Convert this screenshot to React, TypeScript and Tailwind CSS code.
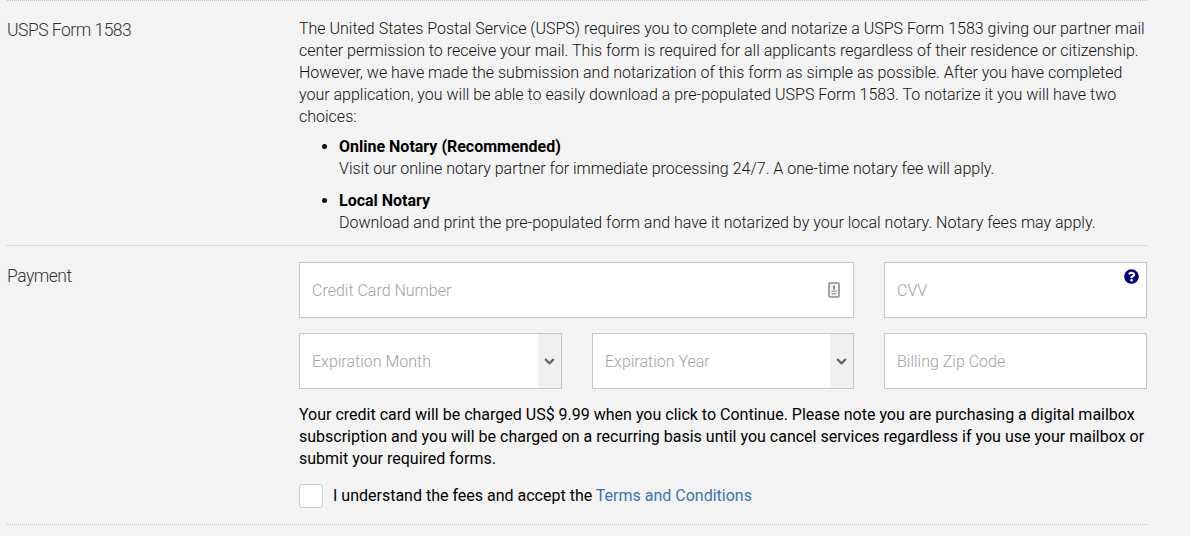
import { ChevronDown } from "lucide-react"

function CardIcon() {
  return (
    <svg viewBox="0 0 12 16" className="absolute right-[14px] top-[20px] h-[16px] w-[12px]">
      <rect x="1" y="1" width="10" height="14" rx="1" fill="#f4f4f4" stroke="#8c8c8c" strokeWidth="1.6" />
      <rect x="5" y="3.5" width="2" height="4" fill="#8c8c8c" />
      <rect x="3.5" y="8.5" width="5" height="1.5" fill="#a8a8a8" />
      <rect x="3.5" y="11" width="5" height="1.5" fill="#a8a8a8" />
    </svg>
  )
}

function Field({ placeholder }: { placeholder: string }) {
  return (
    <input
      placeholder={placeholder}
      className="h-[56px] w-full border border-[#c6c6c6] bg-white px-[12px] text-base font-light text-black outline-none placeholder:text-[#a2a2a2]"
    />
  )
}

function SelectBox({ label, className }: { label: string; className: string }) {
  return (
    <div className={`flex h-[56px] items-stretch border border-[#c6c6c6] bg-white ${className}`}>
      <div className="flex flex-1 items-center pt-[1px] pl-[12px] text-base font-light text-[#a2a2a2]">{label}</div>
      <div className="flex w-[23px] items-center justify-center bg-[#f0f0f0]">
        <ChevronDown className="h-[15px] w-[15px] text-[#666666]" strokeWidth={3.5} />
      </div>
    </div>
  )
}

export default function App() {
  return (
    <div className="h-[536px] w-[1190px] overflow-hidden bg-[#f3f3f3] pl-[7px] font-['Roboto',sans-serif] text-base leading-[22px] text-[#111111]">
      <div className="w-[1140px] border-t border-dotted border-[#c4c4c4]">
        <div className="flex border-b border-dotted border-[#c4c4c4] pt-[17px] pb-[11px]">
          <div className="w-[292px] pt-[1px] text-[17.5px] leading-[22px] font-light tracking-[-0.5px] text-[#333333]">USPS Form 1583</div>
          <div className="flex-1 font-light">
            <p>
              The United States Postal Service (USPS) requires you to complete and notarize a USPS Form 1583 giving our partner mail
              center permission to receive your mail. This form is required for all applicants regardless of their residence or citizenship.
              However, we have made the submission and notarization of this form as simple as possible. After you have completed
              your application, you will be able to easily download a pre-populated USPS Form 1583. To notarize it you will have two
              choices:
            </p>
            <ul className="mt-[8px] list-disc pl-10">
              <li className="mb-[10px]">
                <strong className="font-bold text-black">Online Notary (Recommended)</strong>
                <br />
                Visit our online notary partner for immediate processing 24/7. A one-time notary fee will apply.
              </li>
              <li>
                <strong className="font-bold text-black">Local Notary</strong>
                <br />
                Download and print the pre-populated form and have it notarized by your local notary. Notary fees may apply.
              </li>
            </ul>
          </div>
        </div>
        <div className="flex border-b border-dotted border-[#c4c4c4] pt-[16px] pb-[16px]">
          <div className="w-[292px] pt-[3px] text-[17.5px] leading-[22px] font-light tracking-[-0.5px] text-[#333333]">Payment</div>
          <div className="flex-1">
            <div className="flex gap-[30px]">
              <div className="relative flex-1">
                <Field placeholder="Credit Card Number" />
                <CardIcon />
              </div>
              <div className="relative w-[263px]">
                <Field placeholder="CVV" />
                <svg viewBox="0 0 512 512" className="absolute right-[8px] top-[7px] h-[15px] w-[15px]">
                  <path
                    fill="#000080"
                    d="M504 256c0 137-111 248-248 248S8 393 8 256 119 8 256 8s248 111 248 248zM262.700 90c-54.500 0-89.300 23-116.500 63.800-3.500 5.300-2.400 12.400 2.700 16.300l34.700 26.300c5.200 3.900 12.600 3 16.700-2.100 17.900-22.700 30.100-35.800 57.300-35.800 20.400 0 45.700 13.100 45.700 32.900 0 15-12.400 22.700-32.500 34-23.500 13.200-54.600 29.600-54.600 70.700V300c0 6.600 5.400 12 12 12h56c6.600 0 12-5.400 12-12v-1.300c0-28.500 83.200-29.700 83.200-106.700 0-58-60.200-102-116.700-102zM256 338c-25.400 0-46 20.600-46 46 0 25.400 20.600 46 46 46s46-20.600 46-46c0-25.400-20.600-46-46-46z"
                  />
                </svg>
              </div>
            </div>
            <div className="mt-[15px] flex gap-[30px]">
              <SelectBox label="Expiration Month" className="w-[263px]" />
              <SelectBox label="Expiration Year" className="w-[262px]" />
              <div className="w-[263px]">
                <Field placeholder="Billing Zip Code" />
              </div>
            </div>
            <p className="mt-[15px] text-black">
              Your credit card will be charged US$ 9.99 when you click to Continue. Please note you are purchasing a digital mailbox
              subscription and you will be charged on a recurring basis until you cancel services regardless if you use your mailbox or
              submit your required forms.
            </p>
            <label className="mt-[14px] flex items-center text-black">
              <span className="h-[24px] w-[24px] rounded-[3px] border border-[#cccccc] bg-white" />
              <span className="ml-[10px]">
                I understand the fees and accept the <a className="text-[#3b73af]">Terms and Conditions</a>
              </span>
            </label>
          </div>
        </div>
      </div>
    </div>
  )
}
